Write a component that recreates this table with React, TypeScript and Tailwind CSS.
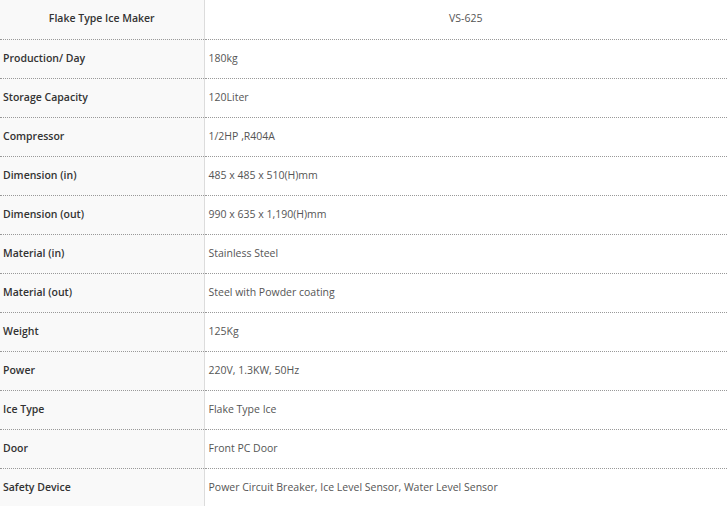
import React from "react";

interface Spec {
  label: string;
  value: string;
}

const specs: Spec[] = [
  { label: "Production/ Day", value: "180kg" },
  { label: "Storage Capacity", value: "120Liter" },
  { label: "Compressor", value: "1/2HP ,R404A" },
  { label: "Dimension (in)", value: "485 x 485 x 510(H)mm" },
  { label: "Dimension (out)", value: "990 x 635 x 1,190(H)mm" },
  { label: "Material (in)", value: "Stainless Steel" },
  { label: "Material (out)", value: "Steel with Powder coating" },
  { label: "Weight", value: "125Kg" },
  { label: "Power", value: "220V, 1.3KW, 50Hz" },
  { label: "Ice Type", value: "Flake Type Ice" },
  { label: "Door", value: "Front PC Door" },
  { label: "Safety Device", value: "Power Circuit Breaker, Ice Level Sensor, Water Level Sensor" },
];

const App: React.FC = () => {
  return (
    <div className="w-[727px] bg-white font-['Open_Sans',sans-serif] text-[10.5px]">
      <table className="w-full border-collapse table-fixed">
        <colgroup>
          <col className="w-[204px]" />
          <col />
        </colgroup>
        <thead>
          <tr className="h-[39px] border-b border-dotted border-[#999]">
            <th className="bg-[#f9f9f9] border-r border-[#dcdcdc] text-center font-semibold text-[#333]">
              Flake Type Ice Maker
            </th>
            <th className="text-center font-normal text-[#555]">VS-625</th>
          </tr>
        </thead>
        <tbody>
          {specs.map((s) => (
            <tr key={s.label} className="h-[39px] border-b border-dotted border-[#999]">
              <td className="bg-[#f9f9f9] border-r border-[#dcdcdc] pl-[3px] font-semibold text-[#333]">
                {s.label}
              </td>
              <td className="pl-[4px] text-[#555]">{s.value}</td>
            </tr>
          ))}
        </tbody>
      </table>
    </div>
  );
};

export default App;
